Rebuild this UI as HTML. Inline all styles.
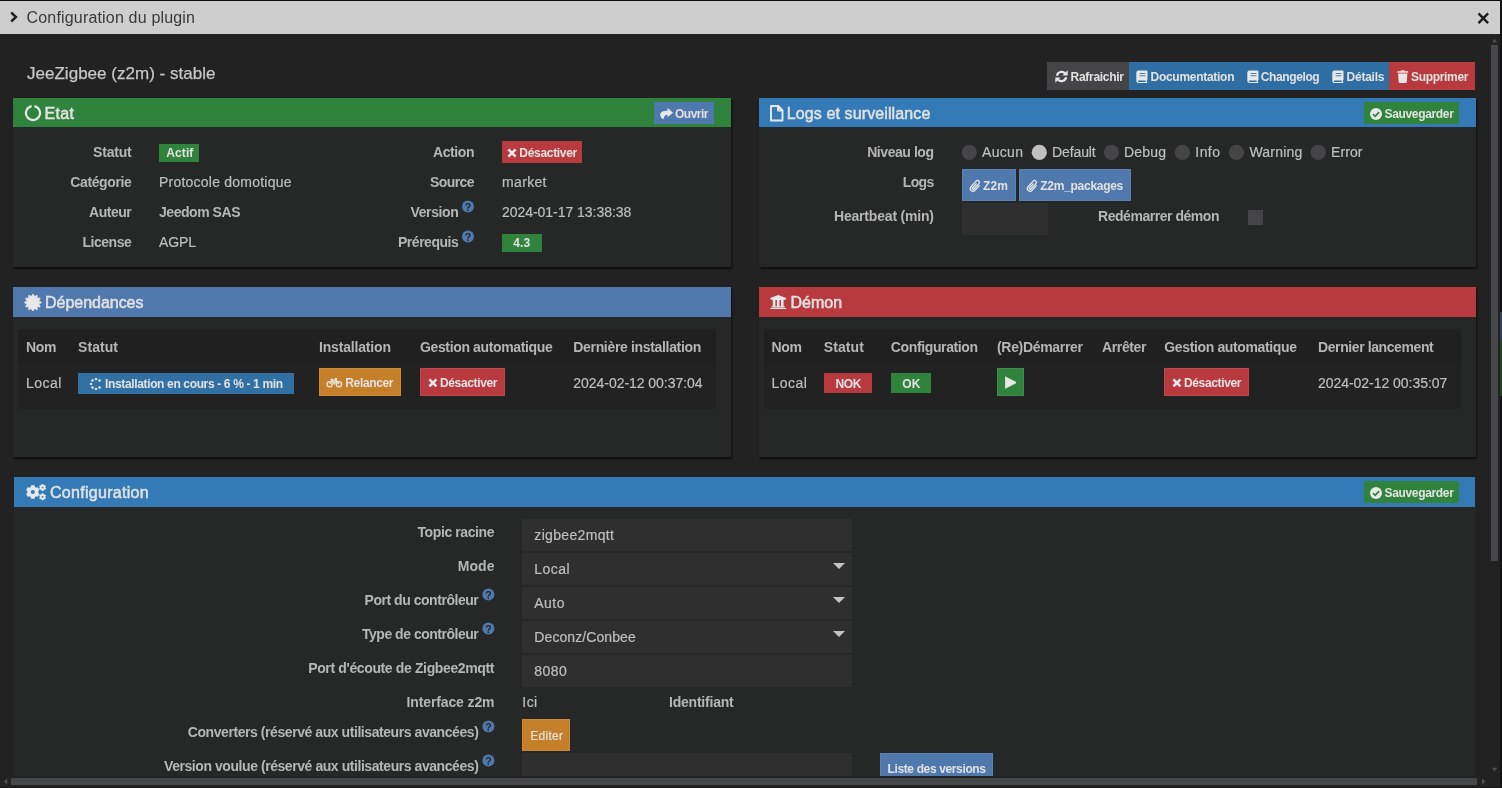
<!DOCTYPE html>
<html lang="fr"><head><meta charset="utf-8"><title>Configuration du plugin</title>
<style>
html,body{margin:0;padding:0;}
body{width:1502px;height:788px;overflow:hidden;position:relative;background:#141414;font-family:"Liberation Sans", sans-serif;}
.abs,.t,.i{position:absolute;display:block;}
.modal{position:absolute;left:0;top:0;width:1500px;height:786.6px;background:#222222;overflow:hidden;}
.modal:before{content:"";position:absolute;left:0;top:0;width:1500px;height:1px;background:#0a0a0a;}
.layer{position:absolute;left:0;top:0;width:1500px;height:788px;will-change:transform;}
.t{white-space:nowrap;line-height:20px;height:20px;font-family:"Liberation Sans", sans-serif;}
.btnb{box-shadow:inset 0 0 0 1px rgba(255,255,255,.08);}
</style></head><body>
<div class="abs" style="left:0px;top:0px;width:1502px;height:788px;background:#141414;"></div>
<div class="abs" style="left:1500px;top:312px;width:2px;height:28px;background:#2b3f5f;"></div>
<div class="abs" style="left:1500px;top:340px;width:2px;height:56px;background:#1e4424;"></div>
<div class="modal"><div class="layer">
<div class="abs titlebar" style="left:0px;top:1px;width:1500px;height:33px;background:#cecece;"></div>
<svg class="i" style="left:9px;top:11px;" width="10" height="12" viewBox="0 0 10 12"><path d="M2.2 1.5 L7 6 L2.2 10.5" stroke="#202020" stroke-width="2.4" fill="none"/></svg>
<span class="t" id="ttl" style="top:7.5px;font-size:16px;font-weight:400;color:#3a3a3a;left:26.5px;letter-spacing:0.179px;">Configuration du plugin</span>
<svg class="i" style="left:1477px;top:11.7px;" width="12.6" height="12.6" viewBox="0 0 12 12"><path d="M1.4 1.4 L10.6 10.6 M10.6 1.4 L1.4 10.6" stroke="#1c1c1c" stroke-width="2.3" fill="none"/></svg>
<div class="abs" style="left:1491px;top:45px;width:7px;height:516px;background:#464749;"></div>
<svg class="i" style="left:1490px;top:36px;" width="10" height="8" viewBox="0 0 10 8"><path d="M2 6.3 L4.6 2.9 L7.2 6.3 Z" fill="#505050"/></svg>
<svg class="i" style="left:1490px;top:765px;" width="10" height="8" viewBox="0 0 10 8"><path d="M1.9 2.8 L4.6 6.4 L7.3 2.8 Z" fill="#505050"/></svg>
<div class="abs" style="left:11px;top:778px;width:1466px;height:7px;background:#464749;"></div>
<span class="t" id="h3" style="top:64.1px;font-size:17px;font-weight:400;color:#c6c6c6;left:27px;letter-spacing:0.020px;-webkit-text-stroke:0.25px;">JeeZigbee (z2m) - stable</span>
<div class="toolbar">
<div class="abs btn" style="left:1047px;top:62px;width:82px;height:28px;background:#454547;"></div>
<div class="abs btn" style="left:1129px;top:62px;width:260px;height:28px;background:#2f6ea3;"></div>
<div class="abs btn" style="left:1389px;top:62px;width:86px;height:28px;background:#b93a3e;"></div>
<svg class="i" style="left:1055px;top:70px;" width="13" height="13" viewBox="0 0 13 13"><path d="M1.9 5.7 A4.7 4.7 0 0 1 10.2 3.6" stroke="#e8e8e8" stroke-width="2.2" fill="none"/><path d="M12.7 0.3 V5.6 H7.4 Z" fill="#e8e8e8"/><path d="M11.1 7.3 A4.7 4.7 0 0 1 2.8 9.4" stroke="#e8e8e8" stroke-width="2.2" fill="none"/><path d="M0.3 12.7 V7.4 H5.6 Z" fill="#e8e8e8"/></svg>
<span class="t" id="b_raf" style="top:66.5px;font-size:12px;font-weight:700;color:#e2e2e2;left:1070.5px;letter-spacing:-0.281px;">Rafraichir</span>
<svg class="i" style="left:1136.3px;top:69.7px;" width="12" height="13.5" viewBox="0 0 12 13.5"><path d="M2.6 0.5 H10.6 Q11.5 0.5 11.5 1.4 V9.6 Q11.5 10.3 10.9 10.5 V12 Q11.5 12.1 11.5 12.6 Q11.5 13 11 13 H2.6 Q0.3 13 0.3 10.7 V2.8 Q0.3 0.5 2.6 0.5 Z M2.6 10.6 Q1.9 10.6 1.9 11.3 Q1.9 12 2.6 12 H9.6 V10.6 Z" fill="#e8e8e8" fill-rule="evenodd"/><rect x="3.6" y="3.1" width="5.8" height="0.85" fill="#2f6ea3"/><rect x="3.6" y="5.4" width="5.8" height="0.85" fill="#2f6ea3"/></svg>
<span class="t" id="b_doc" style="top:66.5px;font-size:12px;font-weight:700;color:#e2e2e2;left:1150.5px;letter-spacing:-0.279px;">Documentation</span>
<svg class="i" style="left:1246.8px;top:69.7px;" width="12" height="13.5" viewBox="0 0 12 13.5"><path d="M2.6 0.5 H10.6 Q11.5 0.5 11.5 1.4 V9.6 Q11.5 10.3 10.9 10.5 V12 Q11.5 12.1 11.5 12.6 Q11.5 13 11 13 H2.6 Q0.3 13 0.3 10.7 V2.8 Q0.3 0.5 2.6 0.5 Z M2.6 10.6 Q1.9 10.6 1.9 11.3 Q1.9 12 2.6 12 H9.6 V10.6 Z" fill="#e8e8e8" fill-rule="evenodd"/><rect x="3.6" y="3.1" width="5.8" height="0.85" fill="#2f6ea3"/><rect x="3.6" y="5.4" width="5.8" height="0.85" fill="#2f6ea3"/></svg>
<span class="t" id="b_chg" style="top:66.5px;font-size:12px;font-weight:700;color:#e2e2e2;left:1260.7px;letter-spacing:-0.375px;">Changelog</span>
<svg class="i" style="left:1332.3px;top:69.7px;" width="12" height="13.5" viewBox="0 0 12 13.5"><path d="M2.6 0.5 H10.6 Q11.5 0.5 11.5 1.4 V9.6 Q11.5 10.3 10.9 10.5 V12 Q11.5 12.1 11.5 12.6 Q11.5 13 11 13 H2.6 Q0.3 13 0.3 10.7 V2.8 Q0.3 0.5 2.6 0.5 Z M2.6 10.6 Q1.9 10.6 1.9 11.3 Q1.9 12 2.6 12 H9.6 V10.6 Z" fill="#e8e8e8" fill-rule="evenodd"/><rect x="3.6" y="3.1" width="5.8" height="0.85" fill="#2f6ea3"/><rect x="3.6" y="5.4" width="5.8" height="0.85" fill="#2f6ea3"/></svg>
<span class="t" id="b_det" style="top:66.5px;font-size:12px;font-weight:700;color:#e2e2e2;left:1346.5px;letter-spacing:-0.227px;">Détails</span>
<svg class="i" style="left:1397.2px;top:70px;" width="11.5" height="13" viewBox="0 0 11.5 13"><path d="M0.3 1.3 H3.6 L4.2 0.2 H7.3 L7.9 1.3 H11.2 V2.8 H0.3 Z M1.1 3.6 H10.4 L9.8 12 Q9.7 13 8.8 13 H2.7 Q1.8 13 1.7 12 Z" fill="#e8e8e8"/></svg>
<span class="t" id="b_sup" style="top:66.5px;font-size:12px;font-weight:700;color:#e2e2e2;left:1411px;letter-spacing:-0.314px;">Supprimer</span>
</div>
<section>
<div class="abs panel" style="left:13px;top:98px;width:718px;height:168.8px;background:#262828;box-shadow:1px 1.5px 2px rgba(0,0,0,.6);"></div><div class="abs phead" style="left:13px;top:98px;width:718px;height:28.8px;background:#30833c;"></div>
<svg class="i" style="left:24px;top:104px;" width="18" height="18" viewBox="0 0 18 18"><path d="M10.4 2.2 A7 7 0 1 1 7.6 2.2" stroke="#e8e8e8" stroke-width="2.2" fill="none"/></svg>
<span class="t" id="p_etat" style="top:103.5px;font-size:16px;font-weight:400;color:#e2e2e2;left:44.6px;letter-spacing:0.277px;-webkit-text-stroke:0.5px;">Etat</span>
<div class="abs btn" style="left:654px;top:102px;width:60px;height:22px;background:#4f78ac;"></div>
<svg class="i" style="left:659.8px;top:108px;" width="13" height="11" viewBox="0 0 12 10"><path d="M7 0 L12 4.2 L7 8.4 V6.1 C5.2 6.1 3.8 6.8 3.6 9.6 L2.3 10 C0.7 8.7 0 7.2 0.2 5.8 C0.6 3.4 3 2.4 7 2.4 Z" fill="#e8e8e8"/></svg>
<span class="t" id="b_ouv" style="top:104.2px;font-size:12px;font-weight:700;color:#e2e2e2;left:675px;letter-spacing:-0.503px;">Ouvrir</span>
<span class="t" id="e_l0" style="top:142px;font-size:14px;font-weight:700;color:#b6b6b6;left:93.1px;letter-spacing:-0.194px;">Statut</span>
<span class="t" id="e_l1" style="top:172px;font-size:14px;font-weight:700;color:#b6b6b6;left:70.3px;letter-spacing:-0.385px;">Catégorie</span>
<span class="t" id="e_l2" style="top:202px;font-size:14px;font-weight:700;color:#b6b6b6;left:89px;letter-spacing:-0.465px;">Auteur</span>
<span class="t" id="e_l3" style="top:232px;font-size:14px;font-weight:700;color:#b6b6b6;left:82.5px;letter-spacing:-0.473px;">License</span>
<div class="abs lab" style="left:159px;top:144px;width:40px;height:18px;background:#30833c;"></div>
<span class="t" id="e_actif" style="top:143px;font-size:12px;font-weight:700;color:#e2e2e2;left:166.3px;letter-spacing:0.082px;">Actif</span>
<span class="t" id="e_v1" style="top:172px;font-size:14px;font-weight:400;color:#bfbfbf;left:159px;letter-spacing:0.227px;-webkit-text-stroke:0.2px;">Protocole domotique</span>
<span class="t" id="e_v2" style="top:202px;font-size:14px;font-weight:700;color:#b6b6b6;left:159px;letter-spacing:-0.455px;">Jeedom SAS</span>
<span class="t" id="e_v3" style="top:232px;font-size:14px;font-weight:400;color:#bfbfbf;left:159px;letter-spacing:-0.100px;-webkit-text-stroke:0.2px;">AGPL</span>
<span class="t" id="e_m0" style="top:142px;font-size:14px;font-weight:700;color:#b6b6b6;left:433px;letter-spacing:-0.412px;">Action</span>
<span class="t" id="e_m1" style="top:172px;font-size:14px;font-weight:700;color:#b6b6b6;left:430px;letter-spacing:-0.594px;">Source</span>
<span class="t" id="e_m2" style="top:202px;font-size:14px;font-weight:700;color:#b6b6b6;left:410.5px;letter-spacing:-0.382px;">Version</span>
<span class="t" id="e_m3" style="top:232px;font-size:14px;font-weight:700;color:#b6b6b6;left:398px;letter-spacing:-0.474px;">Prérequis</span>
<svg class="i" style="left:460px;top:198px" width="16" height="16" viewBox="0 0 16 16"><circle cx="8" cy="8.6" r="6" fill="#4f78ac"/><text x="8" y="12.7" text-anchor="middle" font-family="Liberation Sans, sans-serif" font-size="10.5" font-weight="700" fill="#262828">?</text></svg>
<svg class="i" style="left:460px;top:228px" width="16" height="16" viewBox="0 0 16 16"><circle cx="8" cy="8.6" r="6" fill="#4f78ac"/><text x="8" y="12.7" text-anchor="middle" font-family="Liberation Sans, sans-serif" font-size="10.5" font-weight="700" fill="#262828">?</text></svg>
<div class="abs btn" style="left:502px;top:141px;width:80px;height:22px;background:#b93a3e;"></div>
<svg class="i" style="left:507.3px;top:147.6px;" width="10" height="10" viewBox="0 0 10 10"><path d="M1.4 1.4 L8.6 8.6 M8.6 1.4 L1.4 8.6" stroke="#e8e8e8" stroke-width="2.6" stroke-linecap="butt" fill="none"/></svg>
<span class="t" id="e_des" style="top:143.2px;font-size:12px;font-weight:700;color:#e2e2e2;left:519.3px;letter-spacing:-0.302px;">Désactiver</span>
<span class="t" id="e_w1" style="top:172px;font-size:14px;font-weight:400;color:#bfbfbf;left:502px;letter-spacing:0.341px;-webkit-text-stroke:0.2px;">market</span>
<span class="t" id="e_w2" style="top:202px;font-size:14px;font-weight:400;color:#bfbfbf;left:502px;letter-spacing:-0.039px;-webkit-text-stroke:0.2px;">2024-01-17 13:38:38</span>
<div class="abs lab" style="left:502px;top:234px;width:40px;height:18px;background:#30833c;"></div>
<span class="t" id="e_43" style="top:233px;font-size:12px;font-weight:700;color:#e2e2e2;left:513.3px;letter-spacing:0.100px;">4.3</span>
</section>
<section>
<div class="abs panel" style="left:759px;top:98px;width:716.8px;height:168.8px;background:#262828;box-shadow:1px 1.5px 2px rgba(0,0,0,.6);"></div><div class="abs phead" style="left:759px;top:98px;width:716.8px;height:28.8px;background:#337ab7;"></div>
<svg class="i" style="left:770px;top:105px;" width="13.5" height="16.5" viewBox="0 0 13.5 16.5"><path d="M1 1 H8.3 L12.5 5.2 V15.5 H1 Z M8 1.3 V5.5 H12.2" stroke="#e8e8e8" stroke-width="1.9" fill="none" stroke-linejoin="round"/></svg>
<span class="t" id="p_logs" style="top:103.8px;font-size:16px;font-weight:400;color:#e2e2e2;left:786.8px;letter-spacing:0.109px;-webkit-text-stroke:0.5px;">Logs et surveillance</span>
<div class="abs btn" style="left:1363.5px;top:102px;width:95px;height:22px;background:#30833c;"></div>
<svg class="i" style="left:1369.8px;top:107.5px;" width="12" height="12" viewBox="0 0 12 12"><circle cx="6" cy="6" r="6" fill="#e8e8e8"/><path d="M3 6.2 L5.2 8.3 L9.1 4.2" stroke="#30833c" stroke-width="1.7" fill="none"/></svg>
<span class="t" id="b_sv1" style="top:104.2px;font-size:12px;font-weight:700;color:#e2e2e2;left:1384.5px;letter-spacing:-0.340px;">Sauvegarder</span>
<span class="t" id="l_l0" style="top:142px;font-size:14px;font-weight:700;color:#b6b6b6;left:867.2px;letter-spacing:-0.444px;">Niveau log</span>
<span class="t" id="l_l1" style="top:172px;font-size:14px;font-weight:700;color:#b6b6b6;left:902.7px;letter-spacing:-0.600px;">Logs</span>
<span class="t" id="l_l2" style="top:206px;font-size:14px;font-weight:700;color:#b6b6b6;left:834px;letter-spacing:-0.192px;">Heartbeat (min)</span>
<svg class="i" style="left:960px;top:143px;" width="18" height="18" viewBox="0 0 18 18"><circle cx="9.3" cy="9.3" r="7.6" fill="#454547"/></svg>
<span class="t" id="l_r0" style="top:142px;font-size:14px;font-weight:400;color:#bfbfbf;left:982px;letter-spacing:0.324px;-webkit-text-stroke:0.2px;">Aucun</span>
<svg class="i" style="left:1030px;top:143px;" width="18" height="18" viewBox="0 0 18 18"><circle cx="9.3" cy="9.3" r="7.6" fill="#c0c0c0"/></svg>
<span class="t" id="l_r1" style="top:142px;font-size:14px;font-weight:400;color:#bfbfbf;left:1052px;letter-spacing:-0.100px;-webkit-text-stroke:0.2px;">Default</span>
<svg class="i" style="left:1102px;top:143px;" width="18" height="18" viewBox="0 0 18 18"><circle cx="9.4" cy="9.3" r="7.6" fill="#454547"/></svg>
<span class="t" id="l_r2" style="top:142px;font-size:14px;font-weight:400;color:#bfbfbf;left:1124px;letter-spacing:0.184px;-webkit-text-stroke:0.2px;">Debug</span>
<svg class="i" style="left:1173px;top:143px;" width="18" height="18" viewBox="0 0 18 18"><circle cx="9.4" cy="9.3" r="7.6" fill="#454547"/></svg>
<span class="t" id="l_r3" style="top:142px;font-size:14px;font-weight:400;color:#bfbfbf;left:1195.3px;letter-spacing:0.450px;-webkit-text-stroke:0.2px;">Info</span>
<svg class="i" style="left:1227px;top:143px;" width="18" height="18" viewBox="0 0 18 18"><circle cx="9.4" cy="9.3" r="7.6" fill="#454547"/></svg>
<span class="t" id="l_r4" style="top:142px;font-size:14px;font-weight:400;color:#bfbfbf;left:1249.5px;letter-spacing:0.179px;-webkit-text-stroke:0.2px;">Warning</span>
<svg class="i" style="left:1309px;top:143px;" width="18" height="18" viewBox="0 0 18 18"><circle cx="9.2" cy="9.3" r="7.6" fill="#454547"/></svg>
<span class="t" id="l_r5" style="top:142px;font-size:14px;font-weight:400;color:#bfbfbf;left:1331px;letter-spacing:0.094px;-webkit-text-stroke:0.2px;">Error</span>
<div class="abs btn btnb" style="left:962px;top:169px;width:54px;height:32px;background:#4f78ac;"></div>
<div class="abs btn btnb" style="left:1019px;top:169px;width:112px;height:32px;background:#4f78ac;"></div>
<svg class="i" style="left:968.8px;top:178.5px;" width="13" height="14" viewBox="0 0 13 14"><g transform="translate(6.4,7) rotate(42) translate(-2.7,-6.3)"><path d="M5.4 3.4 V9.8 A2.7 2.7 0 0 1 0 9.8 V2.2 A1.85 1.85 0 0 1 3.7 2.2 V9.4 A0.95 0.95 0 0 1 1.8 9.4 V4.2" stroke="#e8e8e8" stroke-width="1.3" fill="none" stroke-linecap="round"/></g></svg>
<span class="t" id="l_b1" style="top:175.7px;font-size:12px;font-weight:700;color:#e2e2e2;left:983px;letter-spacing:0.100px;">Z2m</span>
<svg class="i" style="left:1025.8px;top:178.5px;" width="13" height="14" viewBox="0 0 13 14"><g transform="translate(6.4,7) rotate(42) translate(-2.7,-6.3)"><path d="M5.4 3.4 V9.8 A2.7 2.7 0 0 1 0 9.8 V2.2 A1.85 1.85 0 0 1 3.7 2.2 V9.4 A0.95 0.95 0 0 1 1.8 9.4 V4.2" stroke="#e8e8e8" stroke-width="1.3" fill="none" stroke-linecap="round"/></g></svg>
<span class="t" id="l_b2" style="top:175.7px;font-size:12px;font-weight:700;color:#e2e2e2;left:1040.3px;letter-spacing:-0.278px;">Z2m_packages</span>
<div class="abs inp" style="left:962px;top:203px;width:85.5px;height:31.5px;background:#2f2f2f;"></div>
<span class="t" id="l_red" style="top:206px;font-size:14px;font-weight:700;color:#b6b6b6;left:1098px;letter-spacing:-0.459px;">Redémarrer démon</span>
<div class="abs chk" style="left:1248px;top:210px;width:15px;height:15px;background:#454547;"></div>
</section>
<section>
<div class="abs panel" style="left:13px;top:287px;width:718px;height:170px;background:#262828;box-shadow:1px 1.5px 2px rgba(0,0,0,.6);"></div><div class="abs phead" style="left:13px;top:287px;width:718px;height:29.8px;background:#4f78ac;"></div>
<svg class="i" style="left:24px;top:293.5px;" width="18" height="17" viewBox="0 0 18 17"><polygon points="7.92,1.87 8.17,0.33 9.63,0.33 9.88,1.87 11.37,2.27 12.35,1.06 13.62,1.79 13.06,3.25 14.15,4.34 15.61,3.78 16.34,5.05 15.13,6.03 15.53,7.52 17.07,7.77 17.07,9.23 15.53,9.48 15.13,10.97 16.34,11.95 15.61,13.22 14.15,12.66 13.06,13.75 13.62,15.21 12.35,15.94 11.37,14.73 9.88,15.13 9.63,16.67 8.17,16.67 7.92,15.13 6.43,14.73 5.45,15.94 4.18,15.21 4.74,13.75 3.65,12.66 2.19,13.22 1.46,11.95 2.67,10.97 2.27,9.48 0.73,9.23 0.73,7.77 2.27,7.52 2.67,6.03 1.46,5.05 2.19,3.78 3.65,4.34 4.74,3.25 4.18,1.79 5.45,1.06 6.43,2.27" fill="#e8e8e8" stroke="#e8e8e8" stroke-width="0.5" stroke-linejoin="round"/></svg>
<span class="t" id="p_dep" style="top:293.2px;font-size:16px;font-weight:400;color:#e2e2e2;left:45px;letter-spacing:-0.025px;-webkit-text-stroke:0.5px;">Dépendances</span>
<div class="abs th" style="left:18px;top:329px;width:697.5px;height:36px;background:#202020;"></div>
<div class="abs tr" style="left:18px;top:365px;width:697.5px;height:43.5px;background:#222222;"></div>
<span class="t" id="d_h0" style="top:337px;font-size:14px;font-weight:700;color:#b6b6b6;left:26px;letter-spacing:-0.312px;">Nom</span>
<span class="t" id="d_h1" style="top:337px;font-size:14px;font-weight:700;color:#b6b6b6;left:78px;letter-spacing:0.066px;">Statut</span>
<span class="t" id="d_h2" style="top:337px;font-size:14px;font-weight:700;color:#b6b6b6;left:319px;letter-spacing:-0.173px;">Installation</span>
<span class="t" id="d_h3" style="top:337px;font-size:14px;font-weight:700;color:#b6b6b6;left:420px;letter-spacing:-0.363px;">Gestion automatique</span>
<span class="t" id="d_h4" style="top:337px;font-size:14px;font-weight:700;color:#b6b6b6;left:573.3px;letter-spacing:-0.330px;">Dernière installation</span>
<span class="t" id="d_c0" style="top:373px;font-size:14px;font-weight:400;color:#bfbfbf;left:26px;letter-spacing:0.450px;-webkit-text-stroke:0.2px;">Local</span>
<div class="abs lab" style="left:78px;top:373px;width:215.5px;height:21px;background:#3170a3;"></div>
<svg class="i" style="left:90px;top:377.7px;" width="12" height="12" viewBox="0 0 12 12"><circle cx="6.00" cy="1.00" r="1.25" fill="#e8e8e8"/><circle cx="9.54" cy="2.46" r="1.25" fill="#e8e8e8"/><circle cx="9.54" cy="9.54" r="1.25" fill="#e8e8e8"/><circle cx="6.00" cy="11.00" r="1.25" fill="#e8e8e8"/><circle cx="2.46" cy="9.54" r="1.25" fill="#e8e8e8"/><circle cx="1.00" cy="6.00" r="1.25" fill="#e8e8e8"/><circle cx="2.46" cy="2.46" r="1.25" fill="#e8e8e8"/></svg>
<span class="t" id="d_lab" style="top:373.5px;font-size:12px;font-weight:700;color:#e2e2e2;left:105px;letter-spacing:-0.354px;">Installation en cours - 6 % - 1 min</span>
<div class="abs btn btnb" style="left:318.5px;top:368px;width:82.3px;height:27.7px;background:#c67f29;"></div>
<svg class="i" style="left:326.3px;top:376.6px;" width="17" height="11" viewBox="0 0 17 11"><circle cx="3.6" cy="7.2" r="2.6" stroke="#e8e8e8" stroke-width="1.25" fill="none"/><circle cx="13" cy="7.2" r="2.6" stroke="#e8e8e8" stroke-width="1.25" fill="none"/><path d="M3.6 7.2 L6.4 3 H10 L13 7.2 M6.4 3 L8.4 7.2 L10.4 2 M4.4 2.3 H6.8 M8.8 1.5 H11.2" stroke="#e8e8e8" stroke-width="1.25" fill="none" stroke-linejoin="round"/></svg>
<span class="t" id="d_rel" style="top:372.9px;font-size:12px;font-weight:700;color:#e2e2e2;left:345.3px;letter-spacing:-0.358px;">Relancer</span>
<div class="abs btn btnb" style="left:420px;top:368px;width:84.8px;height:27.7px;background:#b93a3e;"></div>
<svg class="i" style="left:427.5px;top:377.5px;" width="9.8" height="9.8" viewBox="0 0 10 10"><path d="M1.4 1.4 L8.6 8.6 M8.6 1.4 L1.4 8.6" stroke="#e8e8e8" stroke-width="2.6" stroke-linecap="butt" fill="none"/></svg>
<span class="t" id="d_des" style="top:372.9px;font-size:12px;font-weight:700;color:#e2e2e2;left:440px;letter-spacing:-0.358px;">Désactiver</span>
<span class="t" id="d_dt" style="top:373px;font-size:14px;font-weight:400;color:#bfbfbf;left:573.3px;letter-spacing:-0.039px;-webkit-text-stroke:0.2px;">2024-02-12 00:37:04</span>
</section>
<section>
<div class="abs panel" style="left:759px;top:287px;width:716.8px;height:170px;background:#262828;box-shadow:1px 1.5px 2px rgba(0,0,0,.6);"></div><div class="abs phead" style="left:759px;top:287px;width:716.8px;height:29.8px;background:#b93a3e;"></div>
<svg class="i" style="left:770.3px;top:294.8px;" width="16.4" height="14.4" viewBox="0 0 16.4 14.4"><path d="M8.2 0.1 L16.2 3 V4.2 H14.9 V5 H1.5 V4.2 H0.2 V3 Z M2.8 5 H5.4 V11.3 H2.8 Z M6.9 5 H9.5 V11.3 H6.9 Z M11 5 H13.6 V11.3 H11 Z M1.6 11.2 H14.8 V12.5 H1.6 Z M0.2 12.9 H16.2 V14.3 H0.2 Z" fill="#e8e8e8"/></svg>
<span class="t" id="p_dem" style="top:293.2px;font-size:16px;font-weight:400;color:#e2e2e2;left:790.5px;letter-spacing:0.030px;-webkit-text-stroke:0.5px;">Démon</span>
<div class="abs th" style="left:764px;top:329px;width:696.5px;height:36px;background:#202020;"></div>
<div class="abs tr" style="left:764px;top:365px;width:696.5px;height:43.5px;background:#222222;"></div>
<span class="t" id="m_h0" style="top:337px;font-size:14px;font-weight:700;color:#b6b6b6;left:771.5px;letter-spacing:-0.312px;">Nom</span>
<span class="t" id="m_h1" style="top:337px;font-size:14px;font-weight:700;color:#b6b6b6;left:823.8px;letter-spacing:0.066px;">Statut</span>
<span class="t" id="m_h2" style="top:337px;font-size:14px;font-weight:700;color:#b6b6b6;left:890.8px;letter-spacing:-0.372px;">Configuration</span>
<span class="t" id="m_h3" style="top:337px;font-size:14px;font-weight:700;color:#b6b6b6;left:997px;letter-spacing:-0.317px;">(Re)Démarrer</span>
<span class="t" id="m_h4" style="top:337px;font-size:14px;font-weight:700;color:#b6b6b6;left:1102px;letter-spacing:-0.367px;">Arrêter</span>
<span class="t" id="m_h5" style="top:337px;font-size:14px;font-weight:700;color:#b6b6b6;left:1164.3px;letter-spacing:-0.363px;">Gestion automatique</span>
<span class="t" id="m_h6" style="top:337px;font-size:14px;font-weight:700;color:#b6b6b6;left:1318px;letter-spacing:-0.404px;">Dernier lancement</span>
<span class="t" id="m_c0" style="top:373px;font-size:14px;font-weight:400;color:#bfbfbf;left:771.5px;letter-spacing:0.450px;-webkit-text-stroke:0.2px;">Local</span>
<div class="abs lab" style="left:824px;top:373px;width:47.8px;height:19.7px;background:#b93a3e;"></div>
<span class="t" id="m_nok" style="top:373.5px;font-size:12px;font-weight:700;color:#e2e2e2;left:835.5px;letter-spacing:-0.336px;">NOK</span>
<div class="abs lab" style="left:890.8px;top:373px;width:40px;height:19.7px;background:#30833c;"></div>
<span class="t" id="m_ok" style="top:373.5px;font-size:12px;font-weight:700;color:#e2e2e2;left:902.3px;">OK</span>
<div class="abs btn btnb" style="left:996.5px;top:368px;width:27.3px;height:27.7px;background:#30833c;"></div>
<svg class="i" style="left:1004.7px;top:376px;" width="11.8" height="13.2" viewBox="0 0 11 11.5"><path d="M0.2 0.3 L10.8 5.75 L0.2 11.2 Z" fill="#e8e8e8" stroke="#e8e8e8" stroke-width="0.6" stroke-linejoin="round"/></svg>
<div class="abs btn btnb" style="left:1164px;top:368px;width:84.8px;height:27.7px;background:#b93a3e;"></div>
<svg class="i" style="left:1171.5px;top:377.5px;" width="9.8" height="9.8" viewBox="0 0 10 10"><path d="M1.4 1.4 L8.6 8.6 M8.6 1.4 L1.4 8.6" stroke="#e8e8e8" stroke-width="2.6" stroke-linecap="butt" fill="none"/></svg>
<span class="t" id="m_des" style="top:372.9px;font-size:12px;font-weight:700;color:#e2e2e2;left:1184px;letter-spacing:-0.358px;">Désactiver</span>
<span class="t" id="m_dt" style="top:373px;font-size:14px;font-weight:400;color:#bfbfbf;left:1318px;letter-spacing:-0.039px;-webkit-text-stroke:0.2px;">2024-02-12 00:35:07</span>
</section>
<section>
<div class="abs panel" style="left:14px;top:477px;width:1461px;height:300px;background:#262828;"></div>
<div class="abs phead" style="left:14px;top:477px;width:1461px;height:29.8px;background:#337ab7;"></div>
<svg class="i" style="left:25.5px;top:483.5px;" width="21.5" height="17.5" viewBox="0 0 21.5 17.5"><polygon points="5.16,2.96 5.34,1.46 8.26,1.46 8.44,2.96 10.35,4.06 11.73,3.46 13.19,6.00 11.98,6.90 11.98,9.10 13.19,10.00 11.73,12.54 10.35,11.94 8.44,13.04 8.26,14.54 5.34,14.54 5.16,13.04 3.25,11.94 1.87,12.54 0.41,10.00 1.62,9.10 1.62,6.90 0.41,6.00 1.87,3.46 3.25,4.06" fill="#e8e8e8" stroke="#e8e8e8" stroke-width="0.6" stroke-linejoin="round"/><circle cx="6.8" cy="8.0" r="2.1" fill="#337ab7"/><polygon points="15.83,1.12 15.88,0.28 17.32,0.28 17.37,1.12 18.27,1.64 19.03,1.27 19.75,2.51 19.05,2.98 19.05,4.02 19.75,4.49 19.03,5.73 18.27,5.36 17.37,5.88 17.32,6.72 15.88,6.72 15.83,5.88 14.93,5.36 14.17,5.73 13.45,4.49 14.15,4.02 14.15,2.98 13.45,2.51 14.17,1.27 14.93,1.64" fill="#e8e8e8" stroke="#e8e8e8" stroke-width="0.6" stroke-linejoin="round"/><circle cx="16.6" cy="3.5" r="0.85" fill="#337ab7"/><polygon points="15.83,10.42 15.88,9.58 17.32,9.58 17.37,10.42 18.27,10.94 19.03,10.57 19.75,11.81 19.05,12.28 19.05,13.32 19.75,13.79 19.03,15.03 18.27,14.66 17.37,15.18 17.32,16.02 15.88,16.02 15.83,15.18 14.93,14.66 14.17,15.03 13.45,13.79 14.15,13.32 14.15,12.28 13.45,11.81 14.17,10.57 14.93,10.94" fill="#e8e8e8" stroke="#e8e8e8" stroke-width="0.6" stroke-linejoin="round"/><circle cx="16.6" cy="12.8" r="0.85" fill="#337ab7"/></svg>
<span class="t" id="p_cfg" style="top:483.2px;font-size:16px;font-weight:400;color:#e2e2e2;left:50px;letter-spacing:0.294px;-webkit-text-stroke:0.5px;">Configuration</span>
<div class="abs btn" style="left:1363.5px;top:481px;width:95px;height:22px;background:#30833c;"></div>
<svg class="i" style="left:1369.8px;top:486.5px;" width="12" height="12" viewBox="0 0 12 12"><circle cx="6" cy="6" r="6" fill="#e8e8e8"/><path d="M3 6.2 L5.2 8.3 L9.1 4.2" stroke="#30833c" stroke-width="1.7" fill="none"/></svg>
<span class="t" id="b_sv2" style="top:483.2px;font-size:12px;font-weight:700;color:#e2e2e2;left:1384.5px;letter-spacing:-0.340px;">Sauvegarder</span>
<span class="t" id="c_l0" style="top:522px;font-size:14px;font-weight:700;color:#b6b6b6;left:417.5px;letter-spacing:-0.403px;">Topic racine</span>
<span class="t" id="c_l1" style="top:556px;font-size:14px;font-weight:700;color:#b6b6b6;left:457.8px;letter-spacing:0.046px;">Mode</span>
<span class="t" id="c_l2" style="top:590px;font-size:14px;font-weight:700;color:#b6b6b6;left:364.5px;letter-spacing:-0.460px;">Port du contrôleur</span>
<span class="t" id="c_l3" style="top:624px;font-size:14px;font-weight:700;color:#b6b6b6;left:362px;letter-spacing:-0.481px;">Type de contrôleur</span>
<span class="t" id="c_l4" style="top:658px;font-size:14px;font-weight:700;color:#b6b6b6;left:308.2px;letter-spacing:-0.369px;">Port d'écoute de Zigbee2mqtt</span>
<span class="t" id="c_l5" style="top:692px;font-size:14px;font-weight:700;color:#b6b6b6;left:406.5px;letter-spacing:-0.124px;">Interface z2m</span>
<span class="t" id="c_l6" style="top:722px;font-size:14px;font-weight:700;color:#b6b6b6;left:187.8px;letter-spacing:-0.433px;">Converters (réservé aux utilisateurs avancées)</span>
<span class="t" id="c_l7" style="top:756px;font-size:14px;font-weight:700;color:#b6b6b6;left:164px;letter-spacing:-0.436px;">Version voulue (réservé aux utilisateurs avancées)</span>
<svg class="i" style="left:480px;top:586px" width="16" height="16" viewBox="0 0 16 16"><circle cx="8.4" cy="8.5" r="6" fill="#4f78ac"/><text x="8.4" y="12.6" text-anchor="middle" font-family="Liberation Sans, sans-serif" font-size="10.5" font-weight="700" fill="#262828">?</text></svg>
<svg class="i" style="left:480px;top:620px" width="16" height="16" viewBox="0 0 16 16"><circle cx="8.4" cy="8.5" r="6" fill="#4f78ac"/><text x="8.4" y="12.6" text-anchor="middle" font-family="Liberation Sans, sans-serif" font-size="10.5" font-weight="700" fill="#262828">?</text></svg>
<svg class="i" style="left:480px;top:718px" width="16" height="16" viewBox="0 0 16 16"><circle cx="8.4" cy="8.5" r="6" fill="#4f78ac"/><text x="8.4" y="12.6" text-anchor="middle" font-family="Liberation Sans, sans-serif" font-size="10.5" font-weight="700" fill="#262828">?</text></svg>
<svg class="i" style="left:480px;top:752px" width="16" height="16" viewBox="0 0 16 16"><circle cx="8.4" cy="8.5" r="6" fill="#4f78ac"/><text x="8.4" y="12.6" text-anchor="middle" font-family="Liberation Sans, sans-serif" font-size="10.5" font-weight="700" fill="#262828">?</text></svg>
<div class="abs inp" style="left:522px;top:519px;width:329.5px;height:31.8px;background:#2f2f2f;"></div>
<span class="t" id="c_v0" style="top:524.6px;font-size:14px;font-weight:400;color:#bfbfbf;left:534.3px;letter-spacing:0.342px;-webkit-text-stroke:0.2px;">zigbee2mqtt</span>
<div class="abs inp" style="left:522px;top:553px;width:329.5px;height:31.8px;background:#2f2f2f;"></div>
<span class="t" id="c_v1" style="top:558.6px;font-size:14px;font-weight:400;color:#bfbfbf;left:534.3px;letter-spacing:0.450px;-webkit-text-stroke:0.2px;">Local</span>
<svg class="i" style="left:832.5px;top:563px;" width="12" height="6" viewBox="0 0 12 6"><path d="M0 0 H12 L6 6 Z" fill="#c4c4c4"/></svg>
<div class="abs inp" style="left:522px;top:587px;width:329.5px;height:31.8px;background:#2f2f2f;"></div>
<span class="t" id="c_v2" style="top:592.6px;font-size:14px;font-weight:400;color:#bfbfbf;left:534.3px;letter-spacing:0.450px;-webkit-text-stroke:0.2px;">Auto</span>
<svg class="i" style="left:832.5px;top:597px;" width="12" height="6" viewBox="0 0 12 6"><path d="M0 0 H12 L6 6 Z" fill="#c4c4c4"/></svg>
<div class="abs inp" style="left:522px;top:621px;width:329.5px;height:31.8px;background:#2f2f2f;"></div>
<span class="t" id="c_v3" style="top:626.6px;font-size:14px;font-weight:400;color:#bfbfbf;left:534.3px;letter-spacing:0.091px;-webkit-text-stroke:0.2px;">Deconz/Conbee</span>
<svg class="i" style="left:832.5px;top:631px;" width="12" height="6" viewBox="0 0 12 6"><path d="M0 0 H12 L6 6 Z" fill="#c4c4c4"/></svg>
<div class="abs inp" style="left:522px;top:655px;width:329.5px;height:31.8px;background:#2f2f2f;"></div>
<span class="t" id="c_v4" style="top:660.6px;font-size:14px;font-weight:400;color:#bfbfbf;left:534.3px;letter-spacing:0.450px;-webkit-text-stroke:0.2px;">8080</span>
<span class="t" id="c_ici" style="top:692px;font-size:14px;font-weight:400;color:#bfbfbf;left:522.3px;letter-spacing:0.450px;-webkit-text-stroke:0.2px;">Ici</span>
<span class="t" id="c_idt" style="top:692px;font-size:14px;font-weight:700;color:#b6b6b6;left:669px;letter-spacing:-0.219px;">Identifiant</span>
<div class="abs btn btnb" style="left:522px;top:719px;width:48px;height:32px;background:#c67f29;"></div>
<span class="t" id="c_edt" style="top:725.5px;font-size:12px;font-weight:400;color:#e2e2e2;left:530.3px;letter-spacing:0.268px;-webkit-text-stroke:0.2px;">Editer</span>
<div class="abs inp" style="left:522px;top:753px;width:329.5px;height:24px;background:#2f2f2f;"></div>
<div class="abs btn btnb" style="left:880.3px;top:753px;width:112.7px;height:24px;background:#4f78ac;"></div>
<span class="t" id="c_lst" style="top:759.3px;font-size:12px;font-weight:700;color:#e2e2e2;left:887.5px;letter-spacing:-0.366px;">Liste des versions</span>
</section>
<div class="abs" style="left:0px;top:776.3px;width:1500px;height:10.5px;background:#222222;"></div>
<div class="abs" style="left:11px;top:778px;width:1466px;height:7px;background:#464749;"></div>
<svg class="i" style="left:2px;top:777px;" width="8" height="9" viewBox="0 0 8 9"><path d="M5.2 1.6 L1.8 4.5 L5.2 7.4 Z" fill="#505050"/></svg>
<svg class="i" style="left:1480px;top:777px;" width="8" height="9" viewBox="0 0 8 9"><path d="M2 1.6 L5.4 4.5 L2 7.4 Z" fill="#505050"/></svg>
</div></div>
</body></html>
